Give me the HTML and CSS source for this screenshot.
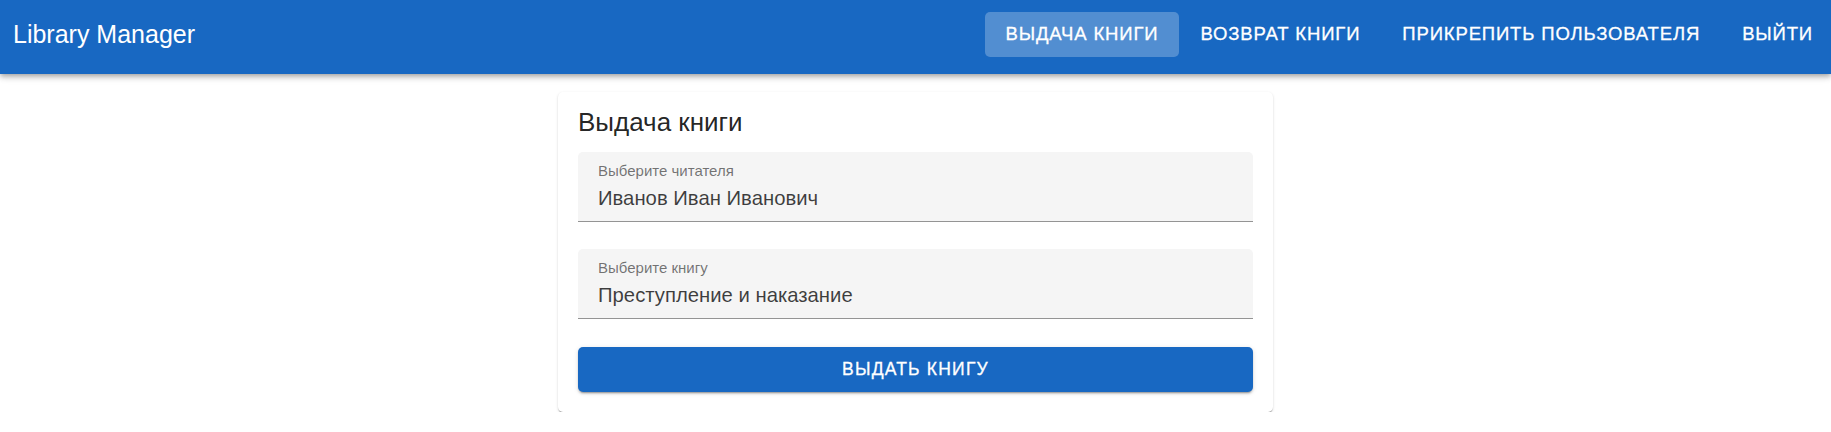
FILE: index.html
```html
<!DOCTYPE html>
<html lang="ru">
<head>
<meta charset="utf-8">
<title>Library Manager</title>
<link rel="stylesheet" href="styles.css">
</head>
<body>
<header class="appbar">
  <div class="brand">Library Manager</div>
  <nav class="nav">
    <a class="nav-btn active">Выдача книги</a>
    <a class="nav-btn">Возврат книги</a>
    <a class="nav-btn">Прикрепить пользователя</a>
    <a class="nav-btn">Выйти</a>
  </nav>
</header>
<main class="main">
  <section class="card">
    <h2 class="card-title">Выдача книги</h2>
    <div class="field">
      <div class="field-label">Выберите читателя</div>
      <div class="field-value">Иванов Иван Иванович</div>
    </div>
    <div class="field">
      <div class="field-label">Выберите книгу</div>
      <div class="field-value">Преступление и наказание</div>
    </div>
    <button class="submit">Выдать книгу</button>
  </section>
</main>
</body>
</html>
```

FILE: styles.css
```css
* { box-sizing: border-box; }
html, body { margin: 0; padding: 0; background: #ffffff; }
body {
  font-family: "Liberation Sans", Arial, sans-serif;
  color: rgba(0, 0, 0, 0.87);
}
.appbar {
  height: 74px;
  background: #1868c2;
  color: #ffffff;
  display: flex;
  align-items: center;
  justify-content: space-between;
  padding: 0 0 6px 13px;
  box-shadow: 0 2px 4px -1px rgba(0,0,0,0.2), 0 4px 5px 0 rgba(0,0,0,0.14), 0 1px 10px 0 rgba(0,0,0,0.12);
  position: relative;
  z-index: 1;
}
.brand {
  font-size: 25px;
  line-height: 30px;
}
.nav {
  display: flex;
  align-items: center;
  margin-right: -3px;
}
.nav-btn {
  display: flex;
  align-items: center;
  height: 45px;
  padding: 0 21px;
  border-radius: 5px;
  font-size: 18.5px;
  letter-spacing: 0.85px;
  text-transform: uppercase;
  color: #ffffff;
  -webkit-text-stroke: 0.3px #ffffff;
  cursor: pointer;
}
.nav-btn.active {
  background: rgba(255, 255, 255, 0.25);
}
.main {
  display: flex;
  justify-content: center;
  padding-top: 18px;
}
.card {
  width: 715px;
  background: #ffffff;
  border-radius: 5px;
  padding: 15px 20px 20px;
  box-shadow: 0 2px 1px -1px rgba(0,0,0,0.2), 0 1px 1px 0 rgba(0,0,0,0.14), 0 1px 3px 0 rgba(0,0,0,0.12);
}
.card-title {
  margin: 0 0 15px;
  font-size: 26px;
  font-weight: 400;
  line-height: 30px;
  color: rgba(0, 0, 0, 0.87);
}
.field {
  background: #f5f5f5;
  border-radius: 5px 5px 0 0;
  border-bottom: 1px solid #949494;
  padding: 10px 20px 11px;
  margin-bottom: 27px;
}
.field + .field {
  margin-bottom: 28px;
}
.field-label {
  font-size: 15px;
  line-height: 17px;
  color: rgba(0, 0, 0, 0.55);
}
.field-value {
  margin-top: 8px;
  font-size: 20.3px;
  line-height: 23px;
  color: rgba(0, 0, 0, 0.75);
}
.submit {
  display: block;
  width: 100%;
  height: 45px;
  border: 0;
  border-radius: 5px;
  background: #1868c2;
  color: #ffffff;
  font-family: inherit;
  font-size: 17.5px;
  letter-spacing: 1.2px;
  text-transform: uppercase;
  -webkit-text-stroke: 0.3px #ffffff;
  box-shadow: 0 3px 1px -2px rgba(0,0,0,0.2), 0 2px 2px 0 rgba(0,0,0,0.14), 0 1px 5px 0 rgba(0,0,0,0.12);
  cursor: pointer;
}
```
